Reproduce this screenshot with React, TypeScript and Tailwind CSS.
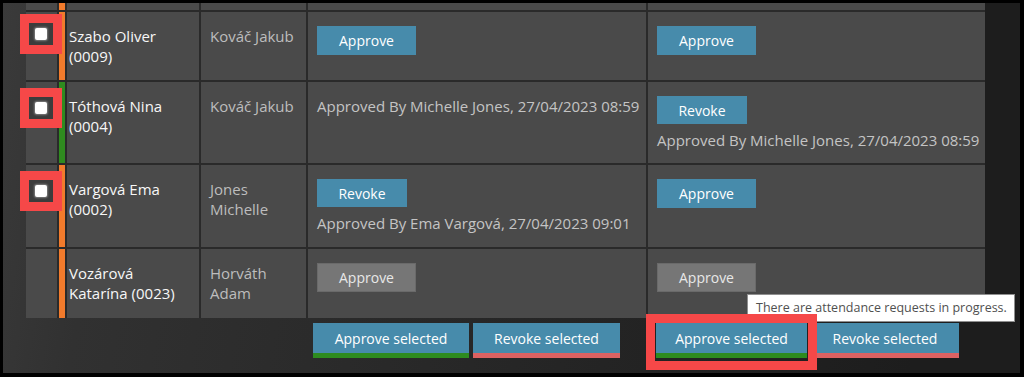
import React from "react";

type Action = { button?: "Approve" | "Revoke"; disabled?: boolean; text?: string };

type Row = {
  stripe: string;
  mark?: string;
  name: string[];
  supervisor: string[];
  first: Action;
  second: Action;
};

const rows: Row[] = [
  {
    stripe: "bg-[#f27b2c]",
    mark: "top-[2px]",
    name: ["Szabo Oliver", "(0009)"],
    supervisor: ["Kováč Jakub"],
    first: { button: "Approve" },
    second: { button: "Approve" },
  },
  {
    stripe: "bg-[#2f8b1f]",
    mark: "top-[6px]",
    name: ["Tóthová Nina", "(0004)"],
    supervisor: ["Kováč Jakub"],
    first: { text: "Approved By Michelle Jones, 27/04/2023 08:59" },
    second: { button: "Revoke", text: "Approved By Michelle Jones, 27/04/2023 08:59" },
  },
  {
    stripe: "bg-[#f27b2c]",
    mark: "top-[6px]",
    name: ["Vargová Ema", "(0002)"],
    supervisor: ["Jones", "Michelle"],
    first: { button: "Revoke", text: "Approved By Ema Vargová, 27/04/2023 09:01" },
    second: { button: "Approve" },
  },
  {
    stripe: "bg-[#f27b2c]",
    name: ["Vozárová", "Katarína (0023)"],
    supervisor: ["Horváth", "Adam"],
    first: { button: "Approve", disabled: true },
    second: { button: "Approve", disabled: true },
  },
];

function SmallButton({ label, disabled }: { label: "Approve" | "Revoke"; disabled?: boolean }) {
  const size = label === "Approve" ? "w-[99px] h-[29px]" : "w-[90px] h-[28px]";
  const tone = disabled
    ? "bg-[#767676] text-[#e8e8e8] border border-[#6a6a6a]"
    : "bg-[#478bab] text-white";
  return (
    <div className={`flex items-center justify-center text-[14px] ${size} ${tone}`}>{label}</div>
  );
}

function ActionCell({ action }: { action: Action }) {
  return (
    <div className="bg-[#4a4a4a] pl-[9px] pt-[14px]">
      {action.button && <SmallButton label={action.button} disabled={action.disabled} />}
      {action.text && (
        <div className={`text-[15px] leading-[20px] text-[#c4c4c4] whitespace-nowrap ${action.button ? "mt-[6px]" : ""}`}>
          {action.text}
        </div>
      )}
    </div>
  );
}

function FooterButton({ label, bar, width }: { label: string; bar: string; width: string }) {
  return (
    <div
      className={`flex h-[35px] items-center justify-center border-b-[5px] bg-[#478bab] text-[14px] text-white ${bar} ${width}`}
    >
      {label}
    </div>
  );
}

export default function App() {
  return (
    <div className="h-[377px] w-[1024px] overflow-hidden bg-black pb-[4px] pl-[3px] pr-[4px] pt-[3px] font-['Open_Sans','Liberation_Sans',sans-serif]">
      <div className="relative h-full w-full overflow-hidden bg-[linear-gradient(100deg,#3a3a3a_0%,#313131_12%,#282828_45%,#1d1d1d_90%)]">
        {/* Tabla */}
        <div className="ml-[23px] grid w-fit grid-cols-[31px_6px_132px_105px_338px_337px] grid-rows-[7px_68px_81px_82px_69px] gap-[2px] bg-[#2a2a2a]">
          {/* fila cortada por el scroll */}
          <div className="bg-[#4a4a4a]" />
          <div className="bg-[#f27b2c]" />
          <div className="bg-[#4a4a4a]" />
          <div className="bg-[#4a4a4a]" />
          <div className="bg-[#4a4a4a]" />
          <div className="bg-[#4a4a4a]" />

          {rows.map((row, i) => (
            <React.Fragment key={i}>
              <div className="relative bg-[#4a4a4a]">
                {row.mark && (
                  <div
                    className={`absolute -left-[6px] z-10 flex h-[40px] w-[42px] items-center justify-center border-[9px] border-[#f64848] bg-[#3c3c3c] ${row.mark}`}
                  >
                    <div className="h-[12px] w-[12px] rounded-[2px] bg-white shadow-[0_0_2px_1px_rgba(255,255,255,0.35)]" />
                  </div>
                )}
              </div>
              <div className={row.stripe} />
              <div className="bg-[#4a4a4a] pl-[2px] pt-[14px] text-[15px] leading-[20px] text-[#f7f7f7]">
                {row.name.map((l) => (
                  <div key={l} className="whitespace-nowrap">{l}</div>
                ))}
              </div>
              <div className="bg-[#4a4a4a] pl-[9px] pt-[14px] text-[15px] leading-[20px] text-[#bdbdbd]">
                {row.supervisor.map((l) => (
                  <div key={l} className="whitespace-nowrap">{l}</div>
                ))}
              </div>
              <ActionCell action={row.first} />
              <ActionCell action={row.second} />
            </React.Fragment>
          ))}
        </div>

        {/* Acciones masivas */}
        <div className="ml-[23px] mt-[5px] grid w-fit grid-cols-[31px_6px_132px_105px_338px_337px] gap-[2px]">
          <div className="col-start-5 flex gap-[4px] pl-[5px]">
            <FooterButton label="Approve selected" bar="border-[#2e8b1f]" width="w-[156px]" />
            <FooterButton label="Revoke selected" bar="border-[#dc6262]" width="w-[147px]" />
          </div>
          <div className="col-start-6 flex gap-[4px] pl-[8px]">
            <div className="relative">
              <div className="shadow-[0_0_0_1px_#222]">
                <FooterButton label="Approve selected" bar="border-[#2e8b1f]" width="w-[151px]" />
              </div>
              <div className="pointer-events-none absolute -bottom-[12px] -left-[10px] -right-[10px] -top-[9px] z-20 border-[9px] border-[#f64848]" />
            </div>
            <FooterButton label="Revoke selected" bar="border-[#dc6262]" width="w-[148px]" />
          </div>
        </div>

        {/* Tooltip */}
        <div className="absolute left-[744px] top-[291px] z-10 flex h-[28px] w-[268px] items-center border border-[#8f8f8f] bg-white pl-[8px] text-[12.5px] text-[#505050] whitespace-nowrap">
          There are attendance requests in progress.
        </div>
      </div>
    </div>
  );
}
